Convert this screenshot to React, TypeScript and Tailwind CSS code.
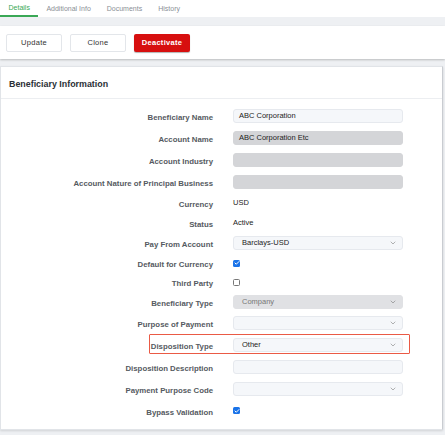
import { ChevronDown, Check } from 'lucide-react';

type Row =
  | { label: string; h: string; kind: 'input'; value?: string; tone?: 'light' | 'gray' }
  | { label: string; h: string; kind: 'select'; value?: string; tone?: 'light' | 'gray'; highlight?: boolean }
  | { label: string; h: string; kind: 'text'; value: string }
  | { label: string; h: string; kind: 'check'; checked: boolean };

const rows: Row[] = [
  { label: 'Beneficiary Name', h: 'h-[23px]', kind: 'input', value: 'ABC Corporation', tone: 'light' },
  { label: 'Account Name', h: 'h-[22px]', kind: 'input', value: 'ABC Corporation Etc', tone: 'gray' },
  { label: 'Account Industry', h: 'h-[22px]', kind: 'input', tone: 'gray' },
  { label: 'Account Nature of Principal Business', h: 'h-[22px]', kind: 'input', tone: 'gray' },
  { label: 'Currency', h: 'h-[20px]', kind: 'text', value: 'USD' },
  { label: 'Status', h: 'h-[20px]', kind: 'text', value: 'Active' },
  { label: 'Pay From Account', h: 'h-[20px]', kind: 'select', value: 'Barclays-USD', tone: 'light' },
  { label: 'Default for Currency', h: 'h-[20px]', kind: 'check', checked: true },
  { label: 'Third Party', h: 'h-[18px]', kind: 'check', checked: false },
  { label: 'Beneficiary Type', h: 'h-[21px]', kind: 'select', value: 'Company', tone: 'gray' },
  { label: 'Purpose of Payment', h: 'h-[22px]', kind: 'select', tone: 'light' },
  { label: 'Disposition Type', h: 'h-[22px]', kind: 'select', value: 'Other', tone: 'light', highlight: true },
  { label: 'Disposition Description', h: 'h-[22px]', kind: 'input', tone: 'light' },
  { label: 'Payment Purpose Code', h: 'h-[22px]', kind: 'select', tone: 'light' },
  { label: 'Bypass Validation', h: 'h-[21px]', kind: 'check', checked: true },
];

function Field({ row }: { row: Row }) {
  if (row.kind === 'text') {
    return <span className="text-[7.5px] text-[#222]">{row.value}</span>;
  }
  if (row.kind === 'check') {
    return row.checked ? (
      <span className="w-[7px] h-[7px] rounded-[1.5px] bg-[#1a73e8] flex items-center justify-center">
        <Check size={6} strokeWidth={4} className="text-white" />
      </span>
    ) : (
      <span className="w-[7px] h-[7px] rounded-[1.5px] border border-[#777] bg-white" />
    );
  }
  const gray = row.tone === 'gray';
  const isSelect = row.kind === 'select';
  const grayBg = isSelect ? 'bg-[#e0e1e4] border-[#e0e1e4] text-[#777]' : 'bg-[#d4d5d8] border-[#d4d5d8] text-[#222]';
  return (
    <div
      className={`w-[170px] h-[14px] rounded-[3px] border flex items-center justify-between text-[7.5px] ${
        isSelect ? 'pl-[8px] pr-[5px]' : 'px-[5px]'
      } ${gray ? grayBg : 'bg-[#f5f7fa] border-[#e6e9ee] text-[#222]'}`}
    >
      <span>{row.value}</span>
      {isSelect && <ChevronDown size={8} strokeWidth={1.5} className="text-[#666]" />}
    </div>
  );
}

export default function App() {
  return (
    <div className="w-[445px] h-[435px] bg-[#eef0f3] font-['Liberation_Sans',Arial,sans-serif] overflow-hidden">
      {/* Tabs */}
      <div className="h-[17px] bg-white flex items-stretch text-[7px]">
        <div className="px-[8.5px] flex items-center text-[#3aa856] border-b-[2px] border-[#3aa856] pt-[2px]">Details</div>
        <div className="px-[8px] flex items-center text-[#8a8f96] pt-[1px]">Additional Info</div>
        <div className="px-[8px] flex items-center text-[#8a8f96] pt-[1px]">Documents</div>
        <div className="px-[8px] flex items-center text-[#8a8f96] pt-[1px]">History</div>
      </div>
      <div className="h-[9px]" />

      {/* Actions */}
      <div className="h-[33px] bg-white flex items-center gap-[8px] px-[6px] shadow-[0_1px_2px_rgba(0,0,0,0.22)]">
        <button className="w-[56px] h-[18px] border border-[#e3e6ea] rounded-[2px] bg-white text-[7.5px] text-[#333] tracking-[0.3px]">Update</button>
        <button className="w-[56px] h-[18px] border border-[#e3e6ea] rounded-[2px] bg-white text-[7.5px] text-[#333] tracking-[0.3px]">Clone</button>
        <button className="w-[56px] h-[18px] rounded-[2px] bg-[#d70f0f] text-[7.5px] text-white font-bold tracking-[0.3px] shadow-[0_1px_1px_rgba(0,0,0,0.3)]">Deactivate</button>
      </div>
      <div className="h-[7px]" />

      {/* Card */}
      <div className="mr-[2px] h-[364px] bg-white border border-[#e1e4e8] border-r-[#c9ccd1] shadow-[0_1px_2px_rgba(0,0,0,0.12)]">
        <div className="h-[32px] flex items-center px-[8px] border-b border-[#eceef1] text-[8.9px] font-bold text-[#2b2f36] pt-[5px]">
          Beneficiary Information
        </div>
        <div className="pt-[5px]">
          {rows.map((row) => (
            <div key={row.label} className={`${row.h} flex items-center relative`}>
              {'highlight' in row && row.highlight && (
                <span className="absolute left-[148px] top-[0px] w-[261px] h-[20px] border-[1.5px] border-[#ea5a45] rounded-[1px]" />
              )}
              <div className="w-[212px] text-right pt-[4px] text-[7.8px] font-bold text-[#555a61]">{row.label}</div>
              <div className="ml-[20px] flex items-center">
                <Field row={row} />
              </div>
            </div>
          ))}
        </div>
      </div>
    </div>
  );
}
